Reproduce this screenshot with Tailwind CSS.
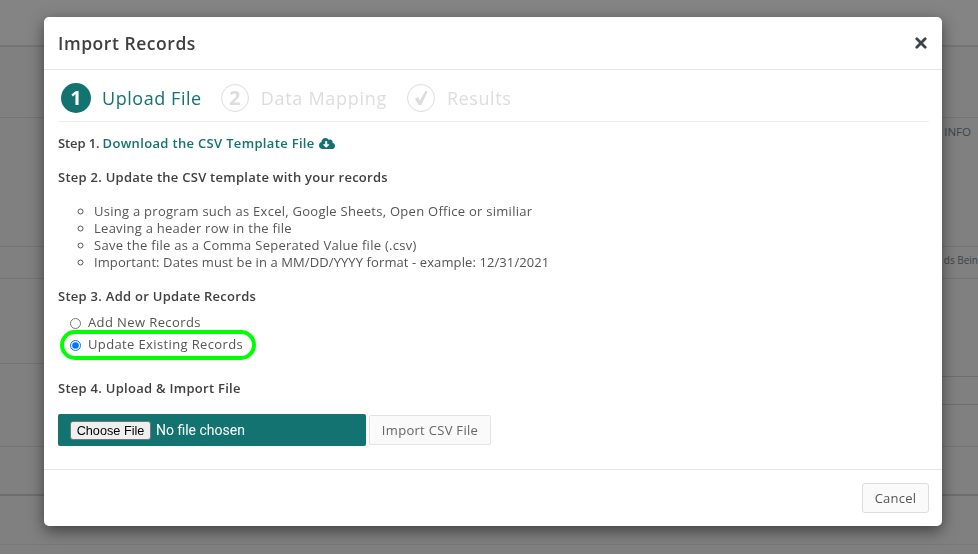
<!DOCTYPE html>
<html lang="en">
<head>
    <title>Import Records</title>
    <script src="https://cdn.jsdelivr.net/npm/@tailwindcss/browser@4"></script>
</head>

<body class="h-[554px] overflow-hidden bg-[#808080] font-['Open_Sans',sans-serif] text-[#404040]">
    <!-- Page behind the backdrop -->
    <div class="h-[554px] flex flex-col">
        <div class="h-[47px] shrink-0 bg-[#848484] border-b-2 border-[#747474]"></div>
        <div class="h-[71px] shrink-0 border-b border-[#747474]"></div>
        <div class="flex justify-end h-[129px] shrink-0 border-b border-[#747474] pt-[5px] pr-[7px] text-[11.5px] text-[#3c4448]">INFO</div>
        <div class="flex justify-end h-[32px] shrink-0 border-b border-[#747474] pt-[6px] text-[10px] text-[#3c4448] whitespace-nowrap overflow-hidden">ds Bein</div>
        <div class="flex justify-between h-[168px] shrink-0 border-b border-[#747474]">
            <div class="w-[44px] h-[85px] border-b border-[#747474]"></div>
            <div class="w-[36px]">
                <div class="h-[98px] border-b border-[#6e6e6e]"></div>
                <div class="h-[28px] border-b border-[#6e6e6e]"></div>
            </div>
        </div>
        <div class="h-[49px] shrink-0 border-b-2 border-[#6e6e6e]"></div>
        <div class="h-[49px] shrink-0 border-b border-[#787878]"></div>
    </div>

    <!-- Modal -->
    <div class="fixed left-[44px] top-[17px] w-[898px] h-[509px] bg-white rounded-[5px] shadow-[0_5px_15px_rgba(0,0,0,0.5)] flex flex-col">
        <div class="h-[53px] shrink-0 border-b border-[#e5e5e5] flex items-center justify-between pl-[14px] pr-[15px]">
            <h4 class="text-[17.5px] font-semibold tracking-[0.55px] text-[#404040]">Import Records</h4>
            <svg class="w-[12px] h-[12px]" viewBox="0 0 12 12"><path d="M1.8 1.8L10.2 10.2M10.2 1.8L1.8 10.2" stroke="#3d4449" stroke-width="2.8" stroke-linecap="round"/></svg>
        </div>

        <div class="flex-1 px-[14px] pt-[13px]">
            <!-- Wizard steps -->
            <div class="flex items-center h-[39px] border-b border-[#eeeeee] pb-[8px] pl-[3px] mr-[-1px]">
                <span class="w-[30px] h-[30px] rounded-full bg-[#137370] text-white text-[20px] font-bold flex items-center justify-center">1</span>
                <span class="ml-[11px] text-[18px] tracking-[0.55px] text-[#137370]">Upload File</span>
                <span class="ml-[19px] w-[28px] h-[28px] rounded-full border border-[#dddddd] text-[#dddddd] text-[20px] font-bold flex items-center justify-center">2</span>
                <span class="ml-[12px] text-[18px] tracking-[0.7px] text-[#dddddd]">Data Mapping</span>
                <span class="ml-[20px] w-[28px] h-[28px] rounded-full border border-[#dddddd] flex items-center justify-center">
                    <svg class="w-[18px] h-[18px]" viewBox="0 0 16 16"><path d="M2.5 8.8L5.3 7.2L7 10.2L12 1.5L13.8 2.4L8.2 14.5H6Z" fill="#dddddd"/></svg>
                </span>
                <span class="ml-[12px] text-[18px] tracking-[0.6px] text-[#dddddd]">Results</span>
            </div>

            <p class="mt-[11px] h-[20px] leading-[20px] text-[13px] font-semibold flex items-center">
                <span class="tracking-[-0.1px]">Step 1.</span>
                <a class="ml-[3px] text-[#137370] tracking-[0.33px]">Download the CSV Template File</a>
                <svg class="ml-[4px] w-[16px] h-[13px]" viewBox="0 0 640 512"><path fill="#137370" d="M537.6 226.6c4.1-10.7 6.4-22.4 6.4-34.6 0-53-43-96-96-96-19.7 0-38.1 6-53.3 16.2C367 64.2 315.3 32 256 32c-88.4 0-160 71.6-160 160 0 2.7.1 5.4.2 8.1C40.2 219.8 0 273.2 0 336c0 79.5 64.5 144 144 144h368c70.7 0 128-57.3 128-128 0-61.9-44-113.6-102.4-125.4zm-132.9 88.7L299.3 420.7c-6.2 6.2-16.4 6.2-22.6 0L171.3 315.3c-10.1-10.1-2.9-27.3 11.3-27.3H248V176c0-8.8 7.2-16 16-16h48c8.8 0 16 7.2 16 16v112h65.4c14.2 0 21.4 17.2 11.3 27.3z"/></svg>
            </p>
            <p class="mt-[14px] h-[20px] leading-[20px] text-[13px] font-semibold tracking-[0.26px]">Step 2. Update the CSV template with your records</p>

            <ul class="mt-[16px] pl-[36px] list-[circle] text-[13px] leading-[17px] tracking-[0.27px] text-[#555555]">
                <li>Using a program such as Excel, Google Sheets, Open Office or similiar</li>
                <li>Leaving a header row in the file</li>
                <li>Save the file as a Comma Seperated Value file (.csv)</li>
                <li class="tracking-[0.1px]">Important: Dates must be in a MM/DD/YYYY format - example: 12/31/2021</li>
            </ul>

            <p class="mt-[15px] h-[20px] leading-[20px] text-[13px] font-semibold tracking-[0.27px]">Step 3. Add or Update Records</p>

            <div class="mt-[6px] text-[13px] tracking-[0.2px] text-[#555555]">
                <label class="flex items-center h-[22px] pl-[12px]">
                    <input type="radio" name="mode" class="m-0 w-[11px] h-[11px]">
                    <span class="ml-[7px] tracking-[0.4px]">Add New Records</span>
                </label>
                <label class="flex items-center h-[30px] w-[196px] mt-[-4px] ml-[2px] pl-[6px] rounded-[15px] border-[4px] border-[#00ff00]">
                    <input type="radio" name="mode" checked class="m-0 w-[11px] h-[11px]">
                    <span class="ml-[7px] tracking-[0.37px]">Update Existing Records</span>
                </label>
            </div>

            <p class="mt-[18px] h-[20px] leading-[20px] text-[13px] font-semibold tracking-[0.27px]">Step 4. Upload &amp; Import File</p>

            <div class="mt-[16px] flex items-center">
                <input type="file" class="w-[308px] h-[32px] rounded-[2px] bg-[#137370] pl-[12px] py-[6px] font-['Roboto',sans-serif] text-[14px] text-white file:mr-[5px] file:h-[19px] file:w-[81px] file:px-0 file:bg-[#efefef] file:text-black file:font-['Liberation_Sans',sans-serif] file:text-[12.7px] file:border file:border-[#767676] file:rounded-[3px]">
                <button class="ml-[3px] h-[30px] w-[122px] rounded-[2px] border border-[#e3e3e3] bg-[#fafafa] pt-[1px] text-[13px] tracking-[0.3px] text-[#666666]">Import CSV File</button>
            </div>
        </div>

        <div class="h-[57px] shrink-0 border-t border-[#e5e5e5] flex items-center justify-end pr-[13px]">
            <button class="h-[30px] w-[67px] rounded-[3px] border border-[#dddddd] bg-[#fafafa] pt-[1px] text-[13px] tracking-[0.25px] text-[#555555]">Cancel</button>
        </div>
    </div>
</body>
</html>
